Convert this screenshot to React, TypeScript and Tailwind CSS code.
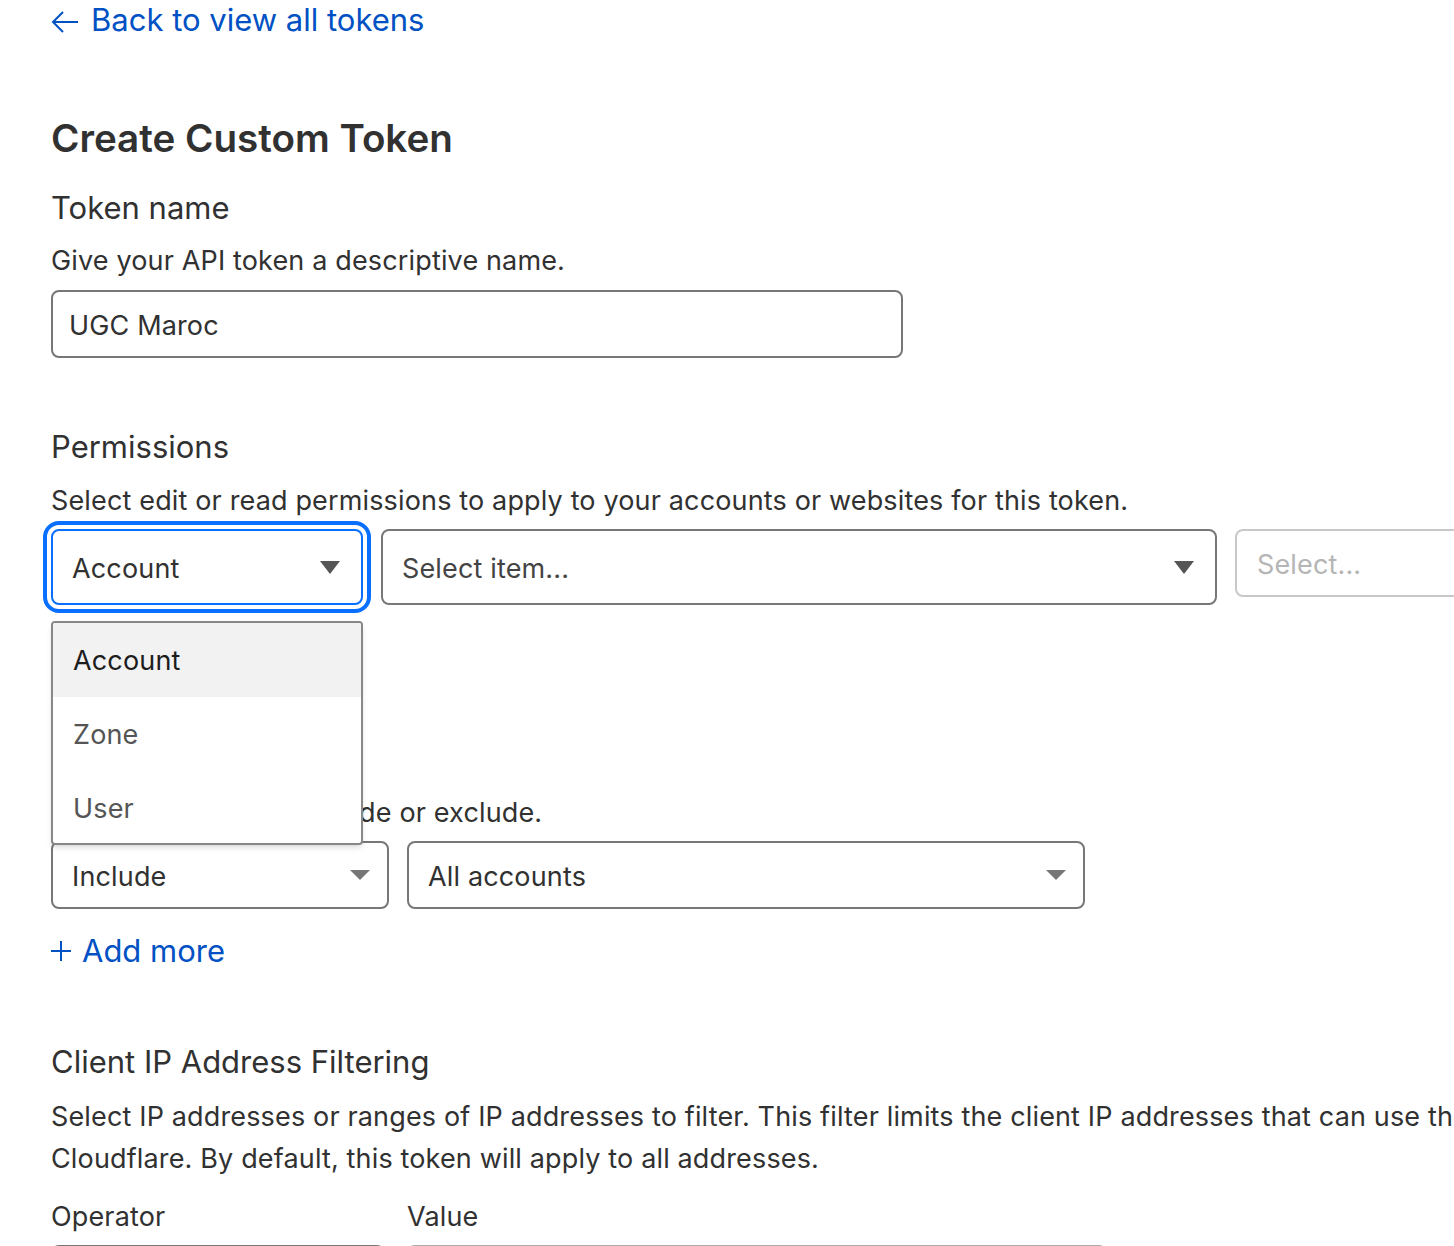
import React from "react";

const font = { fontFamily: "Inter, 'Noto Sans', Arial, sans-serif" };

function Caret({ className = "fill-[#555]", h = 12 }: { className?: string; h?: number }) {
  return (
    <svg width="20" height={h} viewBox={`0 0 20 ${h}`} className={className}>
      <polygon points={`0,0 20,0 10,${h}`} />
    </svg>
  );
}

function Plus() {
  return (
    <svg width="20" height="20" viewBox="0 0 20 20" fill="none" stroke="#0051c3" strokeWidth="2">
      <path d="M10 0v20M0 10h20" />
    </svg>
  );
}

function SelectBox({
  label,
  width,
  height = "h-[68px]",
  muted = false,
  caret = "fill-[#555]",
  caretH = 12,
  pr = "pr-[21px]",
  focused = false,
}: {
  label: string;
  width: string;
  height?: string;
  muted?: boolean;
  caret?: string;
  caretH?: number;
  pr?: string;
  focused?: boolean;
}) {
  return (
    <div
      className={`${width} ${height} ${pr} shrink-0 flex items-center justify-between rounded-lg bg-white pl-[19px] ${
        focused
          ? "border-2 border-[#086fff] outline-4 outline-offset-4 outline-[#086fff] outline"
          : "border-2 border-[#777]"
      }`}
    >
      <span className={`pt-[4px] text-[27px] tracking-[0.15px] ${muted ? "text-[#444]" : "text-[#313131]"}`}>{label}</span>
      <Caret className={caret} h={caretH} />
    </div>
  );
}

export default function App() {
  return (
    <div className="min-h-[1246px] w-full overflow-hidden bg-white text-[#313131]" style={font}>
      <div className="pl-[51px]">
        {/* back link */}
        <a className="flex h-[40px] items-center gap-[12px] text-[31px] leading-[40px] text-[#0051c3]">
          <svg width="28" height="24" viewBox="0 0 28 24" fill="none" stroke="#0051c3" strokeWidth="2" className="mt-[4px]">
            <path d="M27 12H2M12 2L2 12l10 10" />
          </svg>
          Back to view all tokens
        </a>

        <h1 className="mt-[74px] text-[38.6px] font-semibold leading-[48px] text-[#313131]">Create Custom Token</h1>

        {/* token name */}
        <h2 className="mt-[26px] text-[31px] leading-[40px]">Token name</h2>
        <p className="mt-[13px] text-[27px] leading-[40px] tracking-[0.15px]">Give your API token a descriptive name.</p>
        <div className="mt-[9px] flex h-[68px] w-[852px] items-center rounded-lg border-2 border-[#777] pl-[16px] pt-[4px] text-[27px] tracking-[0.15px]">
          UGC Maroc
        </div>

        {/* permissions */}
        <h2 className="mt-[69px] text-[31px] leading-[40px]">Permissions</h2>
        <p className="mt-[14px] whitespace-nowrap text-[27px] leading-[40px] tracking-[0.15px]">
          Select edit or read permissions to apply to your accounts or websites for this token.
        </p>
        <div className="mt-[8px] flex items-start gap-[18px]">
          <div className="relative">
            <SelectBox label="Account" width="w-[312px]" height="h-[76px]" caretH={13} focused />
            <div className="absolute left-0 top-[92px] z-10 w-[312px] overflow-hidden rounded-[4px] border-2 border-[#888] bg-white shadow-md">
              <div className="flex h-[74px] items-center bg-[#f2f2f2] pl-[20px] pt-[3px] text-[27px] tracking-[0.15px] text-[#1d1d1d]">Account</div>
              <div className="flex h-[74px] items-center pl-[20px] pt-[3px] text-[27px] tracking-[0.15px] text-[#555]">Zone</div>
              <div className="flex h-[72px] items-center pl-[20px] pt-[4px] text-[27px] tracking-[0.15px] text-[#555]">User</div>
            </div>
          </div>
          <SelectBox label="Select item..." width="w-[836px]" height="h-[76px]" caretH={13} muted />
          <div className="flex h-[68px] w-[300px] shrink-0 items-center rounded-lg border-2 border-[#c8c8c8] pl-[20px] pt-[4px] text-[27px] tracking-[0.15px] text-[#b5b5b5]">
            Select...
          </div>
        </div>
        <a className="mt-[25px] flex h-[40px] items-center gap-[11px] text-[31px] leading-[40px] text-[#0051c3]">
          <Plus /> Add more
        </a>

        {/* account resources */}
        <h2 className="mt-[68px] text-[31px] leading-[40px]">Account Resources</h2>
        <p className="mt-[15px] text-[27px] leading-[40px] tracking-[0.15px]">Select accounts to include or exclude.</p>
        <div className="mt-[8px] flex gap-[18px]">
          <SelectBox label="Include" width="w-[338px]" caret="fill-[#777]" caretH={10} pr="pr-[17px]" />
          <SelectBox label="All accounts" width="w-[678px]" caret="fill-[#777]" caretH={10} pr="pr-[17px]" />
        </div>
        <a className="mt-[22px] flex h-[40px] items-center gap-[11px] text-[31px] leading-[40px] text-[#0051c3]">
          <Plus /> Add more
        </a>

        {/* client ip filtering */}
        <h2 className="mt-[71px] text-[31px] leading-[40px]">Client IP Address Filtering</h2>
        <p className="mt-[14px] whitespace-nowrap text-[27px] leading-[42px] tracking-[0.15px]">
          Select IP addresses or ranges of IP addresses to filter. This filter limits the client IP addresses that can use the API token to access
          <br />
          Cloudflare. By default, this token will apply to all addresses.
        </p>
        <div className="mt-[17px] flex gap-[22px]">
          <div className="w-[334px] shrink-0">
            <div className="text-[27px] leading-[40px] tracking-[0.15px]">Operator</div>
            <div className="mt-[8px] h-[68px] rounded-lg border-2 border-[#777]" />
          </div>
          <div className="w-[700px] shrink-0">
            <div className="text-[27px] leading-[40px] tracking-[0.15px]">Value</div>
            <div className="mt-[8px] h-[68px] rounded-lg border-2 border-[#aaa]" />
          </div>
        </div>
      </div>
    </div>
  );
}
